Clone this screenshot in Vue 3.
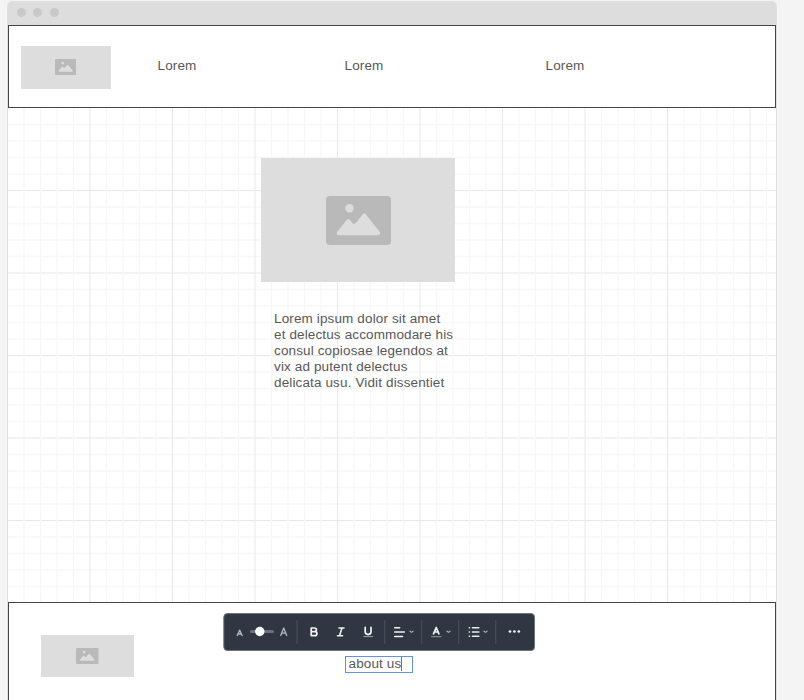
<script setup>
import { h } from 'vue'

const navItems = ['Lorem', 'Lorem', 'Lorem']
const vertical = Array.from({ length: 46 }, (_, i) => ({ pos: 16 + i * 16.5, major: i % 5 === 4 }))
const horizontal = Array.from({ length: 30 }, (_, i) => ({ pos: 16.5 + i * 16.5, major: i % 5 === 4 }))

const ImageGlyph = () =>
  h('svg', { viewBox: '0 0 65 49', preserveAspectRatio: 'none' }, [
    h('rect', { width: 65, height: 49, rx: 4, fill: '#b9b9b9' }),
    h('circle', { cx: 23.5, cy: 12.3, r: 4.2, fill: '#ddd' }),
    h('path', {
      d: 'M11.5 35.5 20.8 23.8Q22.3 22 23.7 23.8L26.5 27.2Q28.2 28.7 29.8 27L36.8 18.3Q38.3 16.4 39.8 18.3L53.4 35.5C55 37.5 54 39.2 52 39.2H13C10.8 39.2 10 37.5 11.5 35.5Z',
      fill: '#ddd'
    })
  ])
</script>

<template>
  <main class="stage">
    <section class="window">
      <div class="titlebar"><i></i><i></i><i></i></div>
      <header class="header">
        <div class="logo"><ImageGlyph class="glyph" /></div>
        <nav class="nav"><span v-for="(n, i) in navItems" :key="i">{{ n }}</span></nav>
      </header>
      <div class="canvas">
        <svg class="grid" width="768" height="494">
          <line v-for="l in horizontal" :key="'h' + l.pos" x1="0" x2="768" :y1="l.pos" :y2="l.pos" :class="{ major: l.major }" />
          <line v-for="l in vertical" :key="'v' + l.pos" y1="0" y2="494" :x1="l.pos" :x2="l.pos" :class="{ major: l.major }" />
        </svg>
        <div class="hero"><ImageGlyph class="glyph" /></div>
        <p class="copy">Lorem ipsum dolor sit amet<br />et delectus accommodare his<br />consul copiosae legendos at<br />vix ad putent delectus<br />delicata usu. Vidit dissentiet</p>
      </div>
      <footer class="footer">
        <div class="footer-logo"><ImageGlyph class="glyph" /></div>
        <div class="edit">about us<span class="caret"></span></div>
        <div class="toolbar">
          <svg width="312" height="38" viewBox="0 0 312 38" fill="none" stroke-linecap="round" stroke-linejoin="round">
            <rect x=".8" y=".5" width="310.700" height="37" rx="3.500" fill="#303642" stroke="#6b7581" />
            <path d="M74 7v24M161.700 7v24M198.700 7v24M235.700 7v24M272.700 7v24" stroke="#484e59" stroke-width="1.200" stroke-linecap="butt" />
            <path d="M14.300 22.500 16.700 17.200l2.400 5.300M15.300 21h2.900" stroke="#b5b8bc" stroke-width="1.400" />
            <path d="M28.500 18.500h21" stroke="#6b7079" stroke-width="3" />
            <circle cx="36.800" cy="18.500" r="4.700" fill="#fff" />
            <path d="M57.700 22.500 60.700 15l3 7.500M58.700 20.200h4" stroke="#b5b8bc" stroke-width="1.300" />
            <path d="M88.200 15h3.300c2.600 0 2.600 3.700 0 3.700h-3.300M88.200 15v7.600h3.700c2.700 0 2.700-3.900 0-3.900" stroke="#f1f2f2" stroke-width="1.700" />
            <path d="M116 15h5M114.500 22.700h5M119 15l-2.500 7.700" stroke="#f1f2f2" stroke-width="1.600" />
            <path d="M142.200 14.300v4.300c0 4 5.800 4 5.800 0v-4.300" stroke="#f1f2f2" stroke-width="1.700" />
            <path d="M140.700 23.600h9" stroke="#9ba0a6" stroke-width="1" />
            <path d="M171.700 14.800h5M171.700 19h9.600M171.700 23.400h7.800" stroke="#f1f2f2" stroke-width="1.500" />
            <path d="m187 18.200 1.500 1.200 1.500-1.200M224 18.200l1.500 1.200 1.500-1.200M261 18.200l1.500 1.200 1.500-1.200" stroke="#aeb2b7" stroke-width="1.200" />
            <path d="m210.500 20.800 2.700-6.300 2.700 6.300M211.500 19h3.400" stroke="#f1f2f2" stroke-width="1.700" />
            <path d="M208.500 23.600h9.500" stroke="#858783" stroke-width="1.100" />
            <path d="M246.300 14.800h.2M246.300 19h.2M246.300 23.200h.2M249.500 14.800h6.300M249.500 19h6.300M249.500 23.200h6.300" stroke="#e9ebea" stroke-width="1.600" />
            <g fill="#f1f2f2"><circle cx="287" cy="18.500" r="1.350" /><circle cx="291.400" cy="18.500" r="1.350" /><circle cx="295.800" cy="18.500" r="1.350" /></g>
          </svg>
        </div>
      </footer>
    </section>
  </main>
</template>

<style>
body { background: #f4f4f4; overflow: hidden; }
</style>

<style scoped>
.stage { height: 700px; overflow: hidden; padding: 1px 0 0 7px; box-sizing: border-box; background: #f4f4f4; font: 13.49px/16px "Liberation Sans", Arial, sans-serif; letter-spacing: .14px; color: #585858; }
.window { width: 768px; height: 710px; border: 1px solid #e0e0e0; border-radius: 5px 5px 0 0; overflow: hidden; background: #fff; }
.titlebar { display: flex; height: 23px; box-sizing: border-box; padding: 6px 0 0 9px; gap: 7px; background: #ddd; }
.titlebar i { width: 9px; height: 9px; border-radius: 50%; background: #c9c9c9; }
.titlebar i:last-child { margin-left: 1px; }
.header { display: flex; height: 83px; box-sizing: border-box; border: 1px solid #444; padding: 20px 0 0 12px; }
.logo, .footer-logo, .hero { display: flex; align-items: center; justify-content: center; background: #ddd; }
.logo { width: 90px; height: 43px; box-sizing: border-box; padding: 0 1px 1px 0; }
.logo .glyph { width: 21.500px; height: 16px; }
.nav { display: grid; grid-template-columns: 187px 201px 80px; padding: 12px 0 0 46.500px; }
.canvas { position: relative; height: 494px; box-sizing: border-box; padding: 50px 0 0 253px; background: #fff; }
.grid { position: absolute; top: 0; left: 0; }
.grid line { stroke: #f7f7f7; stroke-width: 1.300; }
.grid line.major { stroke: #e8e8e8; stroke-width: 1; }
.hero { position: relative; width: 194px; height: 124px; }
.hero .glyph { width: 65px; height: 49px; }
.copy { position: relative; margin: 29px 0 0 13px; white-space: nowrap; }
.footer { position: relative; display: flex; height: 130px; box-sizing: border-box; border: 1px solid #444; padding: 32px 0 0 32px; }
.footer-logo { width: 93px; height: 42px; }
.footer-logo .glyph { width: 22.500px; height: 16px; }
.edit { display: flex; width: 68px; height: 17px; box-sizing: border-box; margin: 21px 0 0 211px; padding-left: 2.500px; border: 1px solid #6690ec; line-height: 14px; white-space: nowrap; }
.caret { width: 1px; height: 14px; background: #5279be; }
.toolbar { position: absolute; top: 10px; left: 214px; }
.toolbar svg { display: block; }
</style>
